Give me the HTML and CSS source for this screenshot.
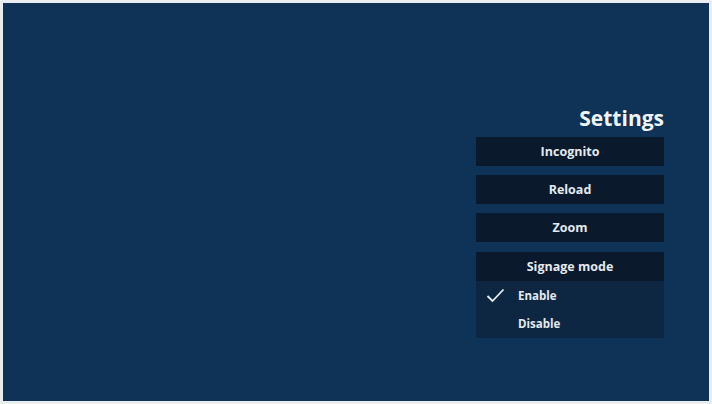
FILE: index.html
```html
<!DOCTYPE html>
<html>
<head>
<meta charset="utf-8">
<link rel="stylesheet" href="styles.css">
</head>
<body>
<div class="screen">
  <div class="panel">
    <div class="title">Settings</div>
    <div class="item">Incognito</div>
    <div class="item">Reload</div>
    <div class="item">Zoom</div>
    <div class="group">
      <div class="item head">Signage mode</div>
      <div class="sub">
        <div class="opt"><span class="check"><svg width="19" height="15" viewBox="0 0 19 15"><path d="M1.5 8 L6.5 13 L17.5 1.5" fill="none" stroke="#e8eef4" stroke-width="1.8"/></svg></span><span>Enable</span></div>
        <div class="opt"><span class="check"></span><span>Disable</span></div>
      </div>
    </div>
  </div>
</div>
</body>
</html>
```

FILE: styles.css
```css
html, body {
  margin: 0;
  padding: 0;
}
body {
  width: 712px;
  height: 404px;
  background: #e9eef2;
  padding: 3px 3px 3px 3px;
  box-sizing: border-box;
  font-family: "Open Sans", "Noto Sans", sans-serif;
}
.screen {
  width: 706px;
  height: 398px;
  background: #0f3356;
  display: flex;
  justify-content: flex-end;
  box-sizing: border-box;
  padding: 102px 45px 0 0;
}
.panel {
  width: 188px;
  display: flex;
  flex-direction: column;
}
.title {
  text-align: right;
  color: #f1f4f7;
  font-size: 21px;
  font-weight: 700;
  line-height: 26px;
  height: 32px;
}
.item {
  height: 29px;
  background: #0a1a2c;
  color: #e4e9ee;
  font-size: 12.5px;
  font-weight: 700;
  display: flex;
  align-items: center;
  justify-content: center;
  margin-bottom: 9px;
}
.group {
  margin-top: 1px;
}
.group .item.head {
  margin-bottom: 0;
}
.sub {
  background: #0d2742;
  height: 57px;
  display: flex;
  flex-direction: column;
  justify-content: center;
}
.opt {
  height: 28px;
  display: flex;
  align-items: center;
  color: #e4e9ee;
  font-size: 11.5px;
  font-weight: 700;
}
.check {
  width: 42px;
  padding-left: 10px;
  box-sizing: border-box;
  display: flex;
  align-items: center;
}
```
